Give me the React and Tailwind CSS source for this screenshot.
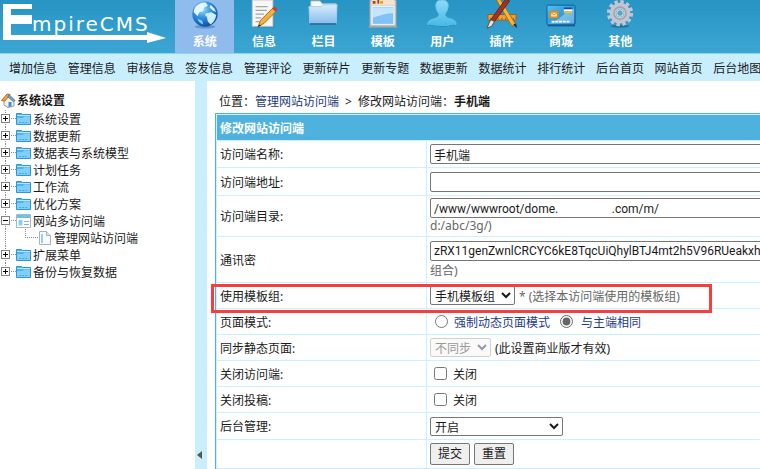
import { useState } from "react";

function GlobeIcon() {
  return (
    <svg viewBox="0 0 32 32" className="h-8 w-8">
      <defs>
        <radialGradient id="globe" cx="40%" cy="30%" r="70%">
          <stop offset="0" stopColor="#9fdcff" />
          <stop offset="0.5" stopColor="#2f92e0" />
          <stop offset="1" stopColor="#0c4fa8" />
        </radialGradient>
      </defs>
      <ellipse cx="16" cy="28.500" rx="11" ry="2" fill="#4b79ad" opacity="0.6" />
      <circle cx="16" cy="15" r="13.500" fill="url(#globe)" />
      <path d="M6 7c3-3 7-5 11-4l2 3-4 2-1 4-4 1-2 4-4-4c0-2 1-4 2-6z" fill="#e4f6ff" />
      <path d="M17 14l6-1 5 3c-1 5-3 8-6 10l-3-3-1-5-2-2z" fill="#cfeeff" />
      <path d="M22 5l4 4 2 4-4-2-3-3z" fill="#d8f1ff" />
      <path d="M8 20l5 2 1 4c-3-1-5-3-6-6z" fill="#8fd0fa" />
    </svg>
  );
}

function NoteIcon() {
  return (
    <svg viewBox="0 0 32 32" className="h-8 w-8">
      <path d="M5 1h21l1 28H5z" fill="#3a7896" opacity="0.7" />
      <path d="M3.500 0h22v28h-22z" fill="#f7f7f5" stroke="#c4c6c7" />
      <path d="M7 7h13M7 11h12M7 15h9M7 19h6M7 23h4" stroke="#a3a6a8" strokeWidth="1.300" />
      <path d="M25 9l4 3-13 13-6 3 2-6z" fill="#f6b13c" stroke="#a8641a" />
      <path d="M27 7l3.500 3-2 2.500-4-3.500z" fill="#d33b2c" />
      <path d="M11 26l2 1.500-4 1.500z" fill="#3b2a1b" />
    </svg>
  );
}

function FolderLargeIcon() {
  return (
    <svg viewBox="0 0 32 32" className="h-8 w-8">
      <defs>
        <linearGradient id="folder" x1="0" y1="0" x2="0" y2="1">
          <stop offset="0" stopColor="#d9ecfb" />
          <stop offset="1" stopColor="#86bdeb" />
        </linearGradient>
      </defs>
      <path d="M3 1h10l2 3h15v12H3z" fill="#f7f9fa" stroke="#a9bccb" />
      <path d="M1 7h13l2-2h15l-1 20H2z" fill="url(#folder)" stroke="#a5cdec" />
      <path d="M2 25.500h28" stroke="#2a5b92" strokeWidth="1.500" />
    </svg>
  );
}

function TemplateIcon() {
  return (
    <svg viewBox="0 0 32 32" className="h-8 w-8">
      <path d="M2 0h28v28H2z" fill="#d9d9d9" stroke="#8f9aa1" />
      <path d="M4 0h24v5H4z" fill="#f5e3cc" />
      <path d="M5 1h3v3H5zM10 0h2v4h-2z" fill="#b83a1b" />
      <path d="M13 1h3v3h-3z" fill="#e8a01f" />
      <path d="M4.500 7h23v19h-23z" fill="#7fc3f6" stroke="#f3f7fa" />
      <path d="M5 8h22v6q-10 0-22 5z" fill="#c3e5fd" />
      <path d="M1 28.500h30" stroke="#a6a6a6" strokeWidth="2" />
    </svg>
  );
}

function UserIcon() {
  return (
    <svg viewBox="0 0 32 32" className="h-8 w-8">
      <defs>
        <linearGradient id="user" x1="0" y1="0" x2="0" y2="1">
          <stop offset="0" stopColor="#8fdaf5" />
          <stop offset="1" stopColor="#45b9e6" />
        </linearGradient>
      </defs>
      <path
        d="M16 0c5 0 7 3 6.500 7-.5 4-2 6-3.500 8 0 3 2 4 5 5 5 1 7 3 7 6q-15 4-30 0c0-3 2-5 7-6 3-1 5-2 5-5-1.500-2-3-4-3.500-8C9 3 11 0 16 0z"
        fill="url(#user)"
        stroke="#6cc9ec"
      />
      <path d="M2 26.500q14 3.500 28 0" fill="none" stroke="#1f88bb" />
    </svg>
  );
}

function PluginIcon() {
  return (
    <svg viewBox="0 0 32 32" className="h-8 w-8">
      <path d="M1 15.500h30v6H1z" fill="#e9a23c" stroke="#9c5e14" />
      <path d="M4 19v2M8 19v2M12 19v2M16 19v2M20 19v2M24 19v2M28 19v2" stroke="#8a5514" />
      <path d="M10 0l4-1 16 26-1 3-3-1z" fill="#f5b635" stroke="#a3681a" />
      <path d="M28 26l4 4-1-5z" fill="#33261a" />
      <path d="M20-1l4 2L8 23l-4-2z" fill="#a13325" stroke="#6d1c14" />
      <path d="M4 21l4 2-3 5-5 2 2-5z" fill="#e8e1d8" stroke="#5d4a3d" />
    </svg>
  );
}

function ShopIcon() {
  return (
    <svg viewBox="0 0 32 32" className="h-8 w-8">
      <defs>
        <linearGradient id="card" x1="0" y1="0" x2="1" y2="1">
          <stop offset="0" stopColor="#55c3f3" />
          <stop offset="1" stopColor="#1173bf" />
        </linearGradient>
      </defs>
      <rect x="1" y="5.500" width="30" height="21" rx="1.500" fill="url(#card)" stroke="#0e5c9b" />
      <path d="M2 25q10-3 15-8t13-8v16z" fill="#bfe6fa" opacity="0.5" />
      <rect x="4.500" y="12.500" width="8" height="6" rx="1" fill="#fbe6b5" stroke="#e38b1d" strokeWidth="2" />
      <path d="M5 13l3.500 3 3.500-3" fill="none" stroke="#e38b1d" />
      <path d="M19 8h9v2h-9z" fill="#134f93" />
      <path d="M19 10h9v2h-9z" fill="#fff" />
      <path d="M19 12h9v2h-9z" fill="#f5c02c" />
      <path d="M6 23h20" stroke="#f3fbff" strokeWidth="2" strokeDasharray="3 1" />
      <path d="M2 27.500h29" stroke="#0c4779" />
    </svg>
  );
}

function GearIcon() {
  return (
    <svg viewBox="0 0 32 32" className="h-8 w-8">
      <ellipse cx="16" cy="28" rx="10" ry="1.500" fill="#1d5f83" opacity="0.7" />
      <circle cx="16" cy="14" r="12" fill="none" stroke="#c3c6d2" strokeWidth="4" strokeDasharray="3.600 2.683" />
      <circle cx="16" cy="14" r="7.500" fill="none" stroke="#c3c6d2" strokeWidth="7" />
      <circle cx="16" cy="14" r="6.500" fill="none" stroke="#9da2b3" strokeWidth="1.500" />
      <circle cx="16" cy="14" r="3.500" fill="#5aa6c8" stroke="#e3e5ec" />
    </svg>
  );
}

function Logo() {
  return (
    <div className="relative h-full w-[175px] shrink-0 text-white">
      <svg viewBox="0 0 175 53" className="h-[53px] w-[175px]" fill="currentColor">
        <path d="M3 4h29v5H11v6h21v9H11v11h136v-3l19 6-19 5v-3H3z" />
      </svg>
      <span className="absolute top-3 left-8 font-['DejaVu_Sans'] text-xl leading-6 tracking-widest">mpireCMS</span>
    </div>
  );
}

const tabs = [
  { label: "系统", icon: GlobeIcon },
  { label: "信息", icon: NoteIcon },
  { label: "栏目", icon: FolderLargeIcon },
  { label: "模板", icon: TemplateIcon },
  { label: "用户", icon: UserIcon },
  { label: "插件", icon: PluginIcon },
  { label: "商城", icon: ShopIcon },
  { label: "其他", icon: GearIcon },
];

const quickLinks = [
  "增加信息", "管理信息", "审核信息", "签发信息", "管理评论", "更新碎片", "更新专题",
  "数据更新", "数据统计", "排行统计", "后台首页", "网站首页", "后台地图",
];

const tree = [
  { label: "系统设置" },
  { label: "数据更新" },
  { label: "数据表与系统模型" },
  { label: "计划任务" },
  { label: "工作流" },
  { label: "优化方案" },
  { label: "网站多访问端", children: ["管理网站访问端"] },
  { label: "扩展菜单" },
  { label: "备份与恢复数据", last: true },
];

function Toggle({ open, last }) {
  return (
    <svg viewBox="0 0 16 17" className="h-[17px] w-4 shrink-0" fill="none" shapeRendering="crispEdges">
      <path d={last ? "M5.500 0V8" : "M5.500 0V17"} stroke="#8c8c8c" strokeDasharray="1 1" />
      <path d="M11 8.500h5" stroke="#8c8c8c" strokeDasharray="1 1" />
      <rect x="1.500" y="4.500" width="8" height="8" fill="#fff" stroke="#848484" />
      <path d={open ? "M3 8.500h5" : "M3 8.500h5M5.500 6v5"} stroke="#000" />
    </svg>
  );
}

function FolderIcon() {
  return (
    <svg viewBox="0 0 15 14" className="h-3.5 w-[15px] shrink-0">
      <path d="M.5 1.500h5l1 1h8v10H.5z" fill="#4db4ef" stroke="#2f96d6" />
      <path d="M1 6h6l1-1.500h6V12H1z" fill="#7fcffa" />
      <path d="M1 3.500h13" stroke="#b7e5fd" />
      <path d="M3 10.500h9" stroke="#4aa9df" strokeDasharray="2 1" />
    </svg>
  );
}

function PanelIcon() {
  return (
    <svg viewBox="0 0 15 14" className="h-3.5 w-[15px] shrink-0">
      <path d="M.5 .5h14v13H.5z" fill="#fff" stroke="#a8b7c2" />
      <path d="M1 1h13v3H1z" fill="#6cc0ee" />
      <path d="M2.500 6h4v5.500h-4z" fill="#8ccdf2" />
      <path d="M8 7.500h5M8 10.500h5" stroke="#8fb0c4" />
    </svg>
  );
}

function PageIcon() {
  return (
    <svg viewBox="0 0 14 14" className="h-3.5 w-3.5 shrink-0">
      <path d="M1.500 .5h7l4 4v9h-11z" fill="#f8fbfd" stroke="#a7b3bc" />
      <path d="M8.500 .5v4h4" fill="#dce8f0" stroke="#a7b3bc" />
      <path d="M3 3h2v9H3z" fill="#9ed0ee" />
    </svg>
  );
}

function HomeIcon() {
  return (
    <svg viewBox="0 0 15 15" className="h-[15px] w-[15px] shrink-0">
      <path d="M3 7l5-4 5 4v6l-6 1.500L3 12z" fill="#f4f0e8" stroke="#8d98a5" />
      <path d="M.5 7.500L6 1l3 .5L4 8z" fill="#f0a53a" stroke="#b8701a" />
      <path d="M8 1.500l6 6-1.500 1L7 4z" fill="#7da9cf" stroke="#4f7ba3" />
      <path d="M7.500 9h3v4.500l-3 .5z" fill="#3f8fd0" />
    </svg>
  );
}

function Sidebar() {
  return (
    <nav className="w-[195px] shrink-0 pt-2.5">
      <div className="flex h-[19px] items-center gap-px pl-px font-bold">
        <HomeIcon />
        系统设置
      </div>
      <ul>
        {tree.map((node) => (
          <li key={node.label}>
            <a href="#" className="flex h-[17px] items-center">
              <Toggle open={!!node.children} last={node.last} />
              {node.children ? <PanelIcon /> : <FolderIcon />}
              <span className="pt-0.5 pl-0.5">{node.label}</span>
            </a>
            {node.children?.map((child) => (
              <a key={child} href="#" className="flex h-[17px] items-center">
                <svg viewBox="0 0 38 17" className="h-[17px] w-[38px] shrink-0" shapeRendering="crispEdges" fill="none">
                  <path d="M5.500 0V17M25.500 0V8.500H38" stroke="#8c8c8c" strokeDasharray="1 1" />
                </svg>
                <PageIcon />
                <span className="pt-0.5 pl-0.5">{child}</span>
              </a>
            ))}
          </li>
        ))}
      </ul>
    </nav>
  );
}

function Row({ label, htmlFor, height, children, marked }) {
  return (
    <tr className={height}>
      <td className="relative w-[209px] bg-white px-[3px]">
        <label htmlFor={htmlFor} className="block pt-0.5">{label}</label>
        {marked && (
          <div className="pointer-events-none absolute top-px -left-1.5 z-10 h-[29px] w-[501px] border-3 border-[#f93c3c]" />
        )}
      </td>
      <td className="bg-white px-[3px]">{children}</td>
    </tr>
  );
}

const inputClass =
  "block h-5 w-[480px] rounded-xs border border-[#767676] bg-white px-[3px] pt-px font-['Roboto','Noto_Sans_CJK_SC',sans-serif]";
const selectClass = "h-[19px] rounded-xs border border-[#767676] bg-white";
const buttonClass = "h-[22px] w-10 rounded-xs border border-[#767676] bg-[#efefef]";

function EditForm() {
  const [mode, setMode] = useState("same");

  return (
    <form onSubmit={(e) => e.preventDefault()}>
      <table className="w-[640px] min-w-full table-fixed border-separate border-spacing-px border border-[#4fb2de] bg-[#c9f1ff]">
        <colgroup>
          <col className="w-[209px]" />
          <col />
        </colgroup>
        <thead>
          <tr className="h-[25px]">
            <th colSpan={2} className="bg-[#4fb2de] px-[3px] pt-0.5 text-left text-white">修改网站访问端</th>
          </tr>
        </thead>
        <tbody>
          <Row label="访问端名称:" htmlFor="name" height="h-[26px]">
            <input id="name" className={inputClass} defaultValue="手机端" />
          </Row>
          <Row label="访问端地址:" htmlFor="url" height="h-[27px]">
            <input id="url" className={inputClass} />
          </Row>
          <Row label="访问端目录:" htmlFor="path" height="h-10">
            <input
              id="path"
              className={inputClass}
              defaultValue={"/www/wwwroot/dome." + "\u00a0".repeat(18) + ".com/m/"}
            />
            <p className="text-[#666]">d:/abc/3g/)</p>
          </Row>
          <Row label="通讯密" htmlFor="key" height="h-[45px]">
            <input
              id="key"
              className={inputClass}
              defaultValue="zRX11genZwnlCRCYC6kE8TqcUiQhylBTJ4mt2h5V96RUeakxh8"
            />
            <p className="pt-0.5 text-[#666]">组合)</p>
          </Row>
          <Row label="使用模板组:" htmlFor="tpl" height="h-[25px]" marked>
            <div className="flex items-center gap-1">
              <select id="tpl" className={`${selectClass} w-[85px]`}>
                <option>手机模板组</option>
              </select>
              <span className="pt-0.5 text-[#666]">* (选择本访问端使用的模板组)</span>
            </div>
          </Row>
          <Row label="页面模式:" height="h-[25px]">
            <div className="flex items-center gap-1.5 pl-[5px] text-[#1c3a8c]">
              <input
                type="radio"
                id="dynamic"
                name="mode"
                className="h-[13px] w-[13px] accent-[#666]"
                checked={mode === "dynamic"}
                onChange={() => setMode("dynamic")}
              />
              <label htmlFor="dynamic" className="pt-0.5 pr-1">强制动态页面模式</label>
              <input
                type="radio"
                id="same"
                name="mode"
                className="h-[13px] w-[13px] accent-[#666]"
                checked={mode === "same"}
                onChange={() => setMode("same")}
              />
              <label htmlFor="same" className="pt-0.5 pl-0.5">与主端相同</label>
            </div>
          </Row>
          <Row label="同步静态页面:" htmlFor="sync" height="h-[25px]">
            <div className="flex items-center gap-1">
              <select
                id="sync"
                disabled
                className="h-[19px] w-[61px] rounded-xs border border-[#d0d0d0] bg-[#fafafa] text-[#999]"
              >
                <option>不同步</option>
              </select>
              <span className="pt-0.5">(此设置商业版才有效)</span>
            </div>
          </Row>
          <Row label="关闭访问端:" height="h-[25px]">
            <label className="flex items-center gap-1.5 pl-1">
              <input type="checkbox" className="h-[13px] w-[13px]" />
              <span className="pt-0.5">关闭</span>
            </label>
          </Row>
          <Row label="关闭投稿:" height="h-[25px]">
            <label className="flex items-center gap-1.5 pl-1">
              <input type="checkbox" className="h-[13px] w-[13px]" />
              <span className="pt-0.5">关闭</span>
            </label>
          </Row>
          <Row label="后台管理:" htmlFor="admin" height="h-[26px]">
            <select id="admin" className={`${selectClass} block w-[133px]`}>
              <option>开启</option>
              <option>关闭</option>
            </select>
          </Row>
          <Row height="h-7">
            <div className="flex gap-1">
              <button type="submit" className={buttonClass}>提交</button>
              <button type="reset" className={buttonClass}>重置</button>
            </div>
          </Row>
        </tbody>
      </table>
    </form>
  );
}

export default function App() {
  return (
    <div className="flex h-screen flex-col overflow-hidden bg-white font-['Noto_Sans','Noto_Sans_CJK_SC',sans-serif] text-xs leading-4 text-[#1a1a1a]">
      <header className="flex h-[53px] shrink-0 overflow-hidden bg-linear-to-b from-[#2694c4] to-[#3ca6d3]">
        <Logo />
        <div className="grid w-[475px] shrink-0 grid-cols-8">
          {tabs.map(({ label, icon: Icon }, i) => (
            <a
              key={label}
              href="#"
              className={`flex h-[53px] flex-col items-center justify-end gap-1 pb-[3px] font-bold text-white ${i === 0 ? "bg-[#8fbbed]" : ""}`}
            >
              <Icon />
              {label}
            </a>
          ))}
        </div>
      </header>

      <div className="h-7 shrink-0 border-t border-[#8fd5f2] bg-[#c9efff]">
        <div className="grid w-[772px] grid-cols-13 pl-[9px]">
          {quickLinks.map((text) => (
            <a key={text} href="#" className="whitespace-nowrap leading-[29px]">{text}</a>
          ))}
        </div>
      </div>

      <div className="flex min-h-0 flex-1">
        <Sidebar />
        <button type="button" aria-label="收起" className="flex w-3 shrink-0 items-end bg-[#c9efff] pb-2.5 pl-0.5">
          <svg viewBox="0 0 5 8" className="h-2 w-[5px]">
            <path d="M5 0v8L0 4z" fill="#555" />
          </svg>
        </button>
        <main className="min-w-0 flex-1 overflow-hidden pt-[13px] pl-2">
          <p className="pb-[3px] pl-1">
            位置：<a href="#" className="text-[#1c3a7c]">管理网站访问端</a>
            <span className="px-1.5">&gt;</span>
            修改网站访问端：<b>手机端</b>
          </p>
          <EditForm />
        </main>
      </div>
    </div>
  );
}
